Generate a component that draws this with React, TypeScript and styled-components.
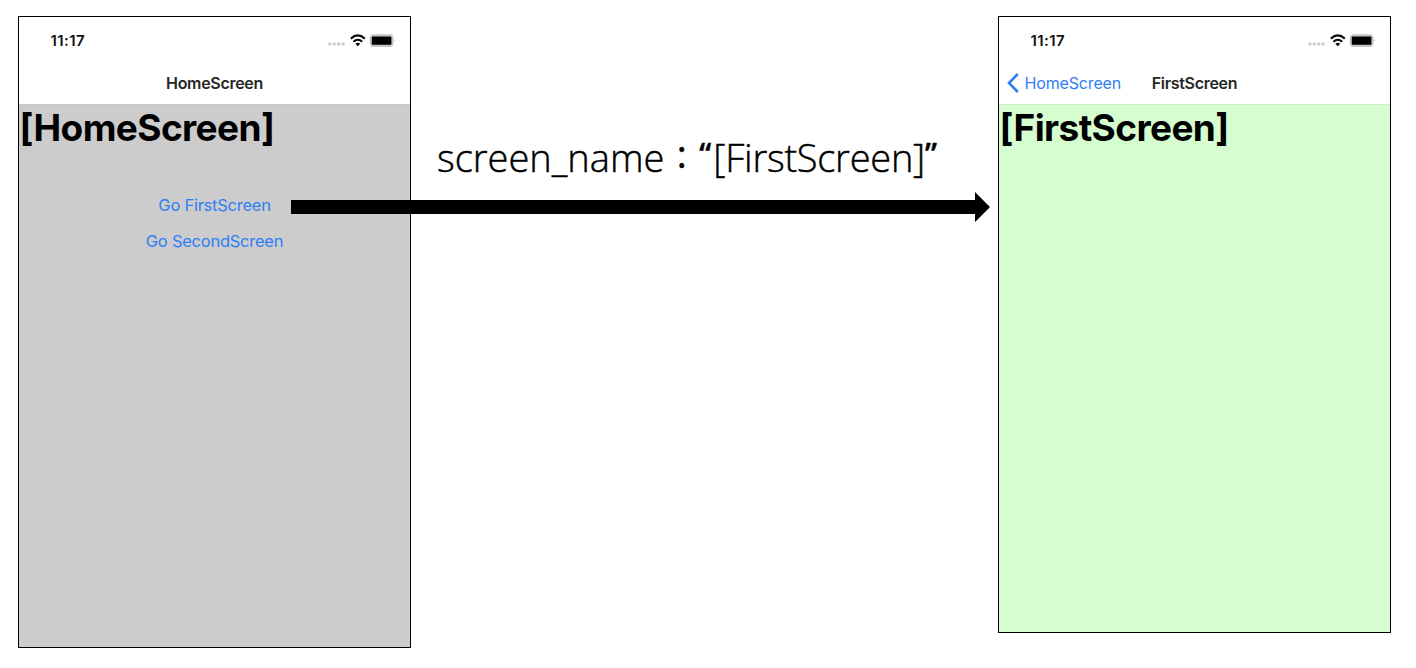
import React from 'react';
import styled, { createGlobalStyle } from 'styled-components';

const GlobalStyle = createGlobalStyle`
  body {
    margin: 0;
    background: #fff;
    font-family: Inter, "Liberation Sans", sans-serif;
  }
`;

const Board = styled.main`
  display: flex;
  align-items: flex-start;
  box-sizing: border-box;
  width: 1416px;
  height: 668px;
  padding: 16px 0 0 18px;
  overflow: hidden;
`;

const Phone = styled.section<{ $height: number }>`
  flex: none;
  display: flex;
  flex-direction: column;
  box-sizing: border-box;
  width: 393px;
  height: ${(p) => p.$height}px;
  border: 1px solid #000;
`;

const StatusBar = styled.div`
  display: flex;
  align-items: center;
  justify-content: space-between;
  height: 46px;
  padding: 2px 15px 0 31.5px;
  box-sizing: border-box;
`;

const Clock = styled.span`
  font-size: 15px;
  line-height: 18px;
  font-weight: 600;
  letter-spacing: 0.4px;
  color: #111;
`;

const NavBar = styled.header`
  display: grid;
  grid-template-columns: 1fr auto 1fr;
  align-items: center;
  height: 41px;
  padding-bottom: 2px;
  box-sizing: border-box;
`;

const BackLink = styled.a`
  display: flex;
  align-items: center;
  gap: 6px;
  padding-left: 7.5px;
  font-size: 16px;
  line-height: 20px;
  letter-spacing: -0.15px;
  color: #2e80f5;
`;

const NavTitle = styled.span`
  grid-column: 2;
  font-size: 16px;
  line-height: 20px;
  font-weight: 600;
  letter-spacing: -0.3px;
  color: #262626;
`;

const Content = styled.div<{ $color: string; $line: string }>`
  flex: 1;
  display: flex;
  flex-direction: column;
  background: ${(p) => p.$color};
  border-top: 1px solid ${(p) => p.$line};
`;

const Heading = styled.h1`
  margin: 0 0 0 0.5px;
  font-size: 37px;
  line-height: 45px;
  font-weight: 700;
  letter-spacing: -0.6px;
  color: #000;
`;

const Links = styled.nav`
  display: flex;
  flex-direction: column;
  align-items: center;
  gap: 16px;
  margin-top: 45px;
`;

const LinkItem = styled.a`
  font-size: 16.5px;
  line-height: 20px;
  letter-spacing: -0.25px;
  color: #2e80f5;
`;

const Connector = styled.div`
  position: relative;
  flex: none;
  width: 587px;
`;

const Label = styled.p`
  display: flex;
  margin: 115px 0 0 26px;
  font-family: "Open Sans", "Noto Sans", sans-serif;
  font-size: 38px;
  line-height: 52px;
  font-weight: 300;
  white-space: pre;
  color: #000;
  -webkit-text-stroke: 0.45px #000;
`;

const Colon = styled.span`
  width: 35px;
  margin-top: -4px;
  text-align: center;
  font-weight: 400;
`;

const Quote = styled.span`
  width: 14px;
  font-size: 30px;
  line-height: 46px;
  font-weight: 600;
`;

const Value = styled.span`
  letter-spacing: -0.25px;
`;

const Arrow = styled.svg`
  position: absolute;
  left: -120px;
  top: 176px;
`;

const StatusIcons = () => (
  <svg width="70" height="16" viewBox="0 0 70 16">
    <g fill="#cdcdcd">
      <circle cx="4.9" cy="11" r="1.8" />
      <circle cx="9.3" cy="11" r="1.8" />
      <circle cx="13.7" cy="11" r="1.8" />
      <circle cx="18.1" cy="11" r="1.8" />
    </g>
    <g fill="none" stroke="#0a0a0a" strokeWidth="2.1">
      <path d="M25.8 5.6Q32.8-0.7 39.8 5.6" />
      <path d="M28.4 8.7Q32.8 4.8 37.2 8.7" />
    </g>
    <path d="M30.4 10.8Q32.8 8.8 35.2 10.8L32.8 13.2Z" fill="#0a0a0a" />
    <rect x="45.4" y="1.9" width="22.4" height="11.4" rx="3" fill="#c4c4c4" stroke="#c4c4c4" strokeWidth="1.2" />
    <rect x="46.8" y="3.4" width="19.6" height="8.4" rx="1" fill="#000" />
    <path d="M68.7 5.8Q70 7.5 68.7 9.2Z" fill="#999" />
  </svg>
);

const Status = () => (
  <StatusBar>
    <Clock>11:17</Clock>
    <StatusIcons />
  </StatusBar>
);

export default function App() {
  return (
    <>
      <GlobalStyle />
      <Board>
        <Phone $height={632}>
          <Status />
          <NavBar>
            <NavTitle>HomeScreen</NavTitle>
          </NavBar>
          <Content $color="#ccc" $line="#c6c6c6">
            <Heading>[HomeScreen]</Heading>
            <Links>
              <LinkItem>Go FirstScreen</LinkItem>
              <LinkItem>Go SecondScreen</LinkItem>
            </Links>
          </Content>
        </Phone>
        <Connector>
          <Label>
            <span>screen_name</span>
            <Colon>:</Colon>
            <Quote>“</Quote>
            <Value>[FirstScreen]</Value>
            <Quote>”</Quote>
          </Label>
          <Arrow width="700" height="30" viewBox="0 0 700 30">
            <path d="M0 8H684V0L699 15L684 30V22H0Z" fill="#000" />
          </Arrow>
        </Connector>
        <Phone $height={617}>
          <Status />
          <NavBar>
            <BackLink>
              <svg width="12" height="20" viewBox="0 0 12 20">
                <path d="M10.8 1L2 10L10.8 19" fill="none" stroke="#2e80f5" strokeWidth="2.6" />
              </svg>
              HomeScreen
            </BackLink>
            <NavTitle>FirstScreen</NavTitle>
          </NavBar>
          <Content $color="#d5fdd0" $line="#cdebc9">
            <Heading>[FirstScreen]</Heading>
          </Content>
        </Phone>
      </Board>
    </>
  );
}
